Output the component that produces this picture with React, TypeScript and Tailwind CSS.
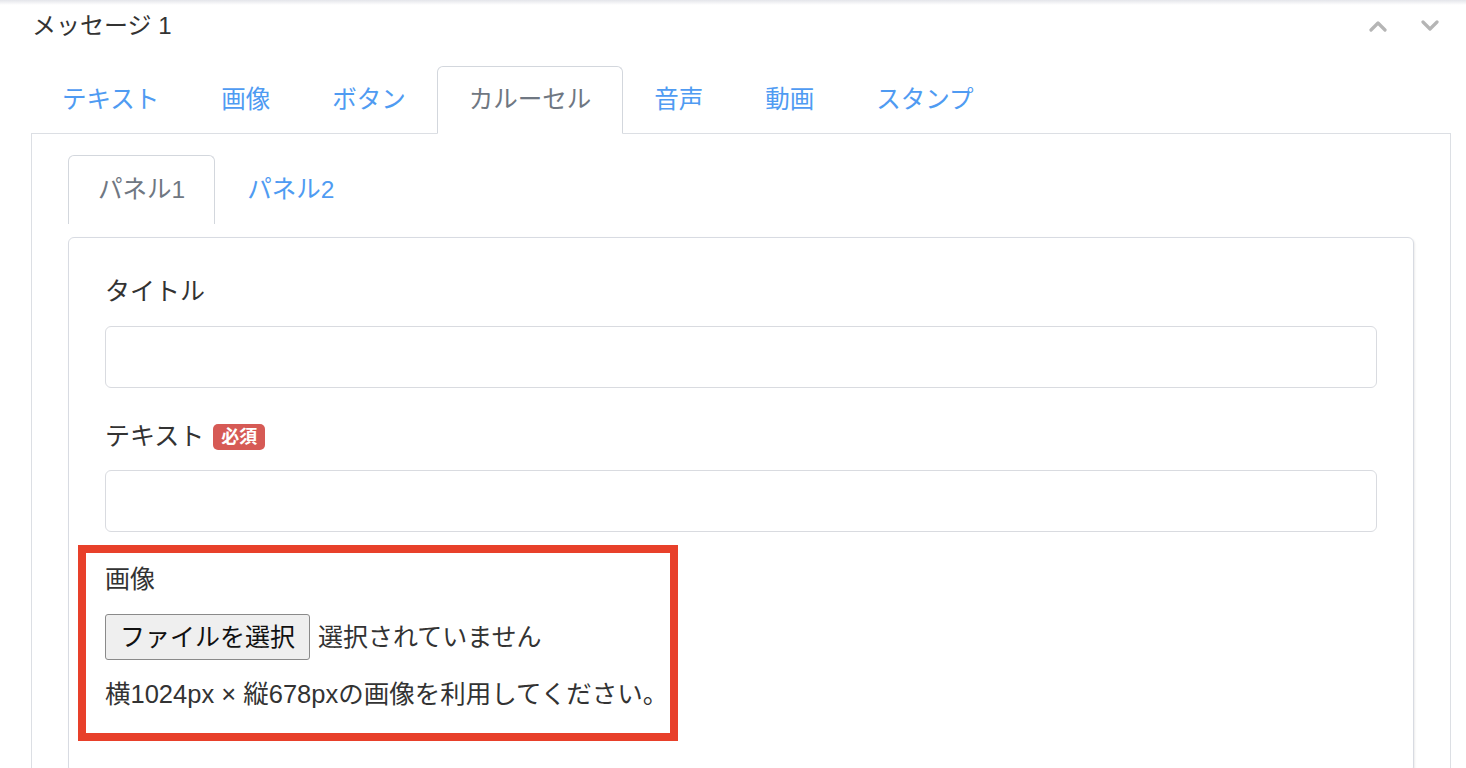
import { useState } from "react"

const font = { fontFamily: '"Liberation Sans", "Noto Sans CJK JP", sans-serif' }

const mainTabs = ["テキスト", "画像", "ボタン", "カルーセル", "音声", "動画", "スタンプ"]

function Chevron({ dir }: { dir: "up" | "down" }) {
  return (
    <svg width="18" height="12" viewBox="0 0 18 12" className="text-[#b5b5b5]">
      <polyline
        points={dir === "up" ? "2,10 9,3 16,10" : "2,2 9,9 16,2"}
        fill="none"
        stroke="currentColor"
        strokeWidth="3.2"
        strokeLinecap="round"
        strokeLinejoin="round"
      />
    </svg>
  )
}

export default function App() {
  const [tab] = useState("カルーセル")

  return (
    <div className="min-h-screen w-full overflow-hidden bg-white text-[#333]" style={font}>
      {/* faint shadow from the block above */}
      <div className="h-[5px] bg-gradient-to-b from-[#e4e5ea] to-white" />

      <div className="pl-[31px] pr-[15px]">
        {/* header */}
        <div className="flex items-center justify-between pt-[3px]">
          <h2 className="pl-px text-[24px] leading-[36px] font-normal text-[#333]">メッセージ 1</h2>
          <div className="mr-[12px] flex items-center gap-[34px]">
            <Chevron dir="up" />
            <Chevron dir="down" />
          </div>
        </div>

        {/* main tabs */}
        <ul className="mt-[22px] flex border-b border-[#dcdfe4]">
          {mainTabs.map((t) => (
            <li key={t} className="-mb-px">
              <span
                className={
                  t === tab
                    ? "block rounded-t-md border border-[#d3d7dd] border-b-white bg-white px-[31px] py-[15px] text-[24.5px] leading-[36px] text-[#6f7782]"
                    : "block border border-transparent px-[30px] py-[15px] text-[24.5px] leading-[36px] text-[#4f9bf2]"
                }
              >
                {t}
              </span>
            </li>
          ))}
        </ul>

        {/* tab content */}
        <div className="border-x border-[#dcdfe4] px-[36px] pt-[21px] pb-[40px]">
          <ul className="flex">
            <li>
              <span className="block rounded-t-md border border-b-0 border-[#d3d7dd] px-[29px] py-[16px] text-[24.5px] leading-[36px] text-[#6f7782]">
                パネル1
              </span>
            </li>
            <li>
              <span className="block border border-transparent px-[31px] py-[16px] text-[24.5px] leading-[36px] text-[#4f9bf2]">
                パネル2
              </span>
            </li>
          </ul>

          <div className="relative mt-[12px] rounded-md border border-[#d8dbe2] px-[36px] pt-[36px] pb-[60px] shadow-[1px_1px_2px_rgba(0,0,0,0.08)]">
            <div className="mb-[31px]">
              <label className="mb-[16px] flex h-[36px] items-center text-[25px]">タイトル</label>
              <div className="h-[62px] rounded-md border border-[#d9dbe0] bg-white" />
            </div>

            <div className="mb-[30px]">
              <label className="mb-[15px] flex h-[36px] items-center text-[25px]">
                テキスト
                <span className="ml-[9px] flex h-[26px] items-center rounded-[5px] bg-[#d65a55] px-[8px] text-[18px] font-bold leading-none text-white">
                  必須
                </span>
              </label>
              <div className="h-[62px] rounded-md border border-[#d9dbe0] bg-white" />
            </div>

            <div>
              <label className="mb-[16px] flex h-[36px] items-center text-[25px]">画像</label>
              <div className="flex items-center gap-[8px]">
                <button className="h-[46px] rounded-[3px] border border-[#8a8a8a] bg-[#efefef] px-[14px] text-[25px] leading-none text-[#111]">
                  ファイルを選択
                </button>
                <span className="text-[25px] leading-[36px]">選択されていません</span>
              </div>
              <p className="mt-[16px] text-[25.5px] leading-[36px]">横1024px × 縦678pxの画像を利用してください。</p>
            </div>

            {/* annotation highlight */}
            <div className="pointer-events-none absolute left-[9px] top-[307px] h-[196px] w-[600px] border-[8px] border-[#e8402a]" />
          </div>
        </div>
      </div>
    </div>
  )
}
